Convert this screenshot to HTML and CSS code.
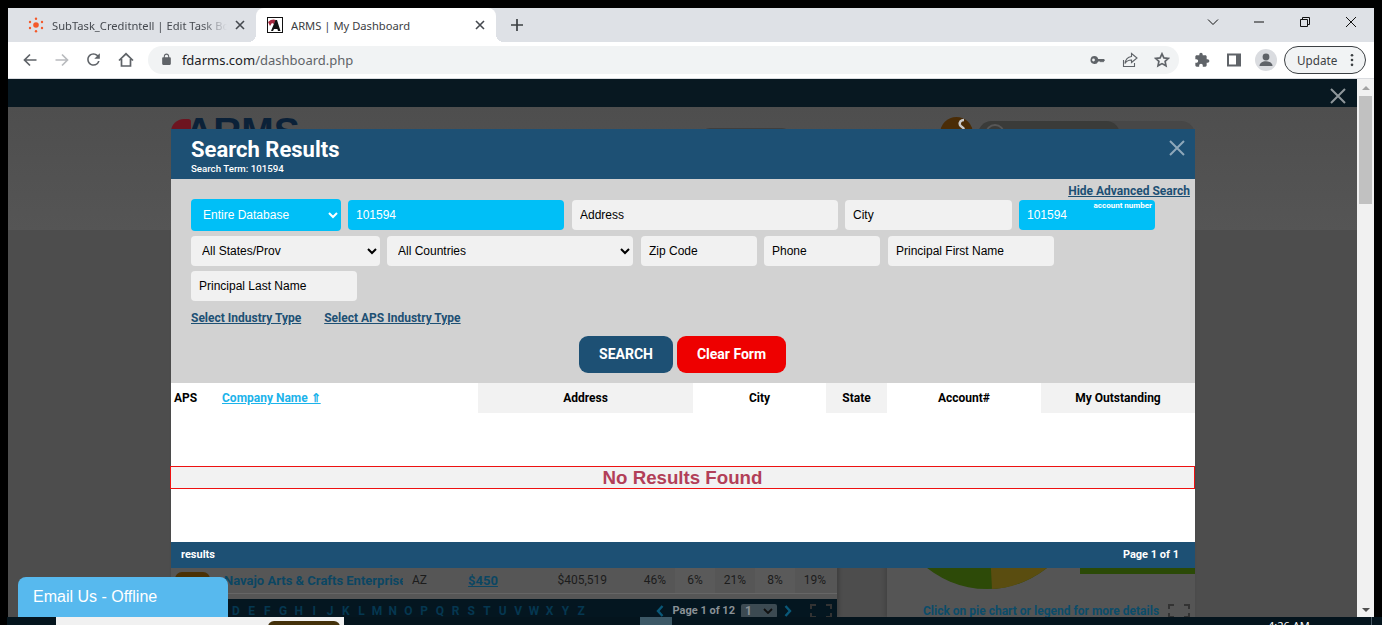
FILE: index.html
```html
<!DOCTYPE html>
<html lang="en">
<head>
  <meta charset="UTF-8">
  <meta name="viewport" content="width=device-width, initial-scale=1.0">
  <title>ARMS | My Dashboard</title>
  <link rel="stylesheet" href="styles.css">
</head>
<body>
  <div class="window">
    <div class="tabstrip">
      <div class="tab">
        <svg class="favicon" viewBox="0 0 16 16">
          <g fill="#f4592a">
            <circle cx="8" cy="8" r="2.8"/>
            <circle cx="8" cy="1.8" r="1.2"/>
            <circle cx="8" cy="14.2" r="1.2"/>
            <circle cx="2" cy="5" r="1.2"/>
            <circle cx="14" cy="5" r="1.2"/>
            <circle cx="2" cy="11" r="1.2"/>
            <circle cx="14" cy="11" r="1.2"/>
          </g>
        </svg>
        <span class="tab-title fade">SubTask_Creditntell | Edit Task Board</span>
        <svg class="tab-x" viewBox="0 0 10 10"><path d="M1 1l8 8M9 1l-8 8"/></svg>
      </div>
      <div class="tab active">
        <svg class="favicon" viewBox="0 0 16 16">
          <rect x="0.5" y="0.5" width="15" height="15" fill="#fff" stroke="#111"/>
          <path d="M1 5c3-3 6-3 8-2L7 7 5 6 3 9z" fill="#a3263d"/>
          <path d="M8.500 3h1.500l3.500 11h-2.500l-.6-2H7l-1 2H4z" fill="#111"/>
        </svg>
        <span class="tab-title">ARMS | My Dashboard</span>
        <svg class="tab-x" viewBox="0 0 10 10"><path d="M1 1l8 8M9 1l-8 8"/></svg>
      </div>
      <svg class="new-tab" viewBox="0 0 12 12"><path d="M6 0v12M0 6h12"/></svg>
      <div class="win-controls">
        <svg viewBox="0 0 12 12"><path d="M1 3.500l5 5 5-5"/></svg>
        <svg viewBox="0 0 12 12"><path d="M1 6h10"/></svg>
        <svg viewBox="0 0 12 12"><path d="M1.500 3.500h7v7h-7zM3.500 3.500v-2h7v7h-2"/></svg>
        <svg viewBox="0 0 12 12"><path d="M1 1l10 10M11 1L1 11"/></svg>
      </div>
    </div>

    <div class="toolbar">
      <button class="tool"><svg viewBox="0 0 16 16" class="line"><path d="M14.500 8h-12M8 2.500L2.500 8 8 13.500"/></svg></button>
      <button class="tool off"><svg viewBox="0 0 16 16" class="line"><path d="M1.500 8h12M8 2.500L13.500 8 8 13.500"/></svg></button>
      <button class="tool"><svg viewBox="0 0 24 24" class="solid"><path d="M17.650 6.350A7.958 7.958 0 0 0 12 4c-4.420 0-7.990 3.580-7.990 8s3.570 8 7.990 8c3.730 0 6.840-2.550 7.730-6h-2.080A5.990 5.990 0 0 1 12 18c-3.310 0-6-2.690-6-6s2.690-6 6-6c1.660 0 3.140.690 4.220 1.780L13 11h7V4l-2.350 2.350z"/></svg></button>
      <button class="tool"><svg viewBox="0 0 16 16" class="line"><path d="M1 8.500L8 1.800l7 6.700M3.500 7v7h9V7"/></svg></button>
      <div class="omnibox">
        <svg class="lock" viewBox="0 0 24 24"><path d="M18 8h-1V6c0-2.760-2.240-5-5-5S7 3.240 7 6v2H6c-1.100 0-2 .9-2 2v10c0 1.100.9 2 2 2h12c1.100 0 2-.9 2-2V10c0-1.100-.9-2-2-2zM9 6c0-1.660 1.340-3 3-3s3 1.340 3 3v2H9V6z"/></svg>
        <span class="url">fdarms.com<span class="url-path">/dashboard.php</span></span>
        <div class="omni-icons">
          <svg viewBox="0 0 16 16" class="solid"><path d="M4.500 4a4 4 0 1 0 3.700 5.500H10l1 1 1-1 1 1 2-2.200L14 7H8.200A4 4 0 0 0 4.500 4zm-1 2.600a1.400 1.400 0 1 1 0 2.800 1.400 1.400 0 0 1 0-2.800z"/></svg>
          <svg viewBox="0 0 16 16" class="line thin"><path d="M1.500 8v6.500h11V11M9.500 1.500L15 6l-5.500 4.500V8C6.500 8 4.500 9 3 11.500 3.500 7.500 6 5 9.500 4.500z"/></svg>
          <svg viewBox="0 0 16 16" class="line"><path d="M8 1.800l1.900 4.100 4.500.5-3.300 3 .9 4.400L8 11.600l-4 2.200.9-4.400-3.300-3 4.500-.5z"/></svg>
        </div>
      </div>
      <div class="browser-icons">
        <svg viewBox="0 0 24 24" class="solid"><path d="M20.500 11H19V7c0-1.100-.9-2-2-2h-4V3.500C13 2.120 11.880 1 10.500 1S8 2.120 8 3.500V5H4c-1.100 0-1.990.9-1.990 2v3.800H3.500c1.490 0 2.700 1.210 2.700 2.700s-1.210 2.700-2.700 2.700H2V20c0 1.100.9 2 2 2h3.800v-1.500c0-1.490 1.210-2.700 2.700-2.700 1.490 0 2.700 1.210 2.700 2.700V22H17c1.100 0 2-.9 2-2v-4h1.500c1.380 0 2.500-1.120 2.500-2.500S21.880 11 20.500 11z"/></svg>
        <svg viewBox="0 0 16 16"><rect x="1" y="1.500" width="14" height="13" fill="#5f6368"/><rect x="3" y="3.500" width="7" height="9" fill="#fff"/></svg>
        <span class="avatar">
          <svg viewBox="0 0 22 22"><circle cx="11" cy="8" r="3.400" fill="#5f6368"/><path d="M4.500 17c0-3 3-4.700 6.500-4.700s6.500 1.700 6.500 4.700z" fill="#5f6368"/></svg>
        </span>
      </div>
      <div class="update-pill">
        <span>Update</span>
        <svg viewBox="0 0 4 16"><circle cx="2" cy="2.500" r="1.500"/><circle cx="2" cy="8" r="1.500"/><circle cx="2" cy="13.500" r="1.500"/></svg>
      </div>
    </div>

    <div class="viewport">
      <div class="page">
        <div class="topbar">
          <svg class="topbar-x" viewBox="0 0 16 16"><path d="M1 1l14 14M15 1L1 15"/></svg>
        </div>
        <div class="page-head">
          <div class="logo"><span class="swoosh"></span><span class="logo-text">ARMS</span></div>
          <div class="head-pill"></div>
          <svg class="head-badge" viewBox="0 0 33 33">
            <circle cx="16.500" cy="16.500" r="16.500" fill="#4a2c06"/>
            <path d="M24 3c-3 0-5 2-4 5 1 2 3 2 4 4" fill="none" stroke="#c9c9c9" stroke-width="2.500"/>
          </svg>
          <div class="head-search"><div class="head-search-in"><span class="head-ring"></span></div></div>
        </div>
        <div class="page-main">
          <div class="aging-card">
            <div class="aging-row">
              <span class="aps-pill"></span>
              <span class="row-name">Navajo Arts &amp; Crafts Enterprise</span>
              <span class="row-state">AZ</span>
              <span class="row-due">$450</span>
              <span class="row-total">$405,519</span>
              <span class="pct">46%</span>
              <span class="pct alt">6%</span>
              <span class="pct">21%</span>
              <span class="pct alt">8%</span>
              <span class="pct">19%</span>
            </div>
            <div class="alpha-bar">
              <div class="letters">
                <span>A</span><span>B</span><span>C</span><span>D</span><span>E</span><span>F</span><span>G</span><span>H</span><span>I</span><span>J</span><span>K</span><span>L</span><span>M</span><span>N</span><span>O</span><span>P</span><span>Q</span><span>R</span><span>S</span><span>T</span><span>U</span><span>V</span><span>W</span><span>X</span><span>Y</span><span>Z</span>
              </div>
              <div class="pager">
                <svg class="chev" viewBox="0 0 8 12"><path d="M6.500 1L2 6l4.500 5"/></svg>
                <span>Page 1 of 12</span>
                <span class="pager-select">1<svg viewBox="0 0 10 6"><path d="M1 1l4 4 4-4"/></svg></span>
                <svg class="chev" viewBox="0 0 8 12"><path d="M1.500 1L6 6l-4.500 5"/></svg>
                <svg class="corners" viewBox="0 0 22 14"><path d="M1 5V1h5M16 1h5v4M1 9v4h5M16 13h5V9"/></svg>
              </div>
            </div>
          </div>
          <div class="pie-card">
            <div class="pie-row">
              <svg class="pie" viewBox="0 0 192 192">
                <circle cx="96" cy="96" r="96" fill="#2d4a08"/>
                <path d="M96 96L101 192A96 96 0 0 0 170 157z" fill="#5a4d10"/>
              </svg>
              <div class="legend-bar"></div>
            </div>
            <div class="pie-note">
              <span>Click on pie chart or legend for more details</span>
              <svg class="corners" viewBox="0 0 22 14"><path d="M1 5V1h5M16 1h5v4M1 9v4h5M16 13h5V9"/></svg>
            </div>
          </div>
        </div>
      </div>

      <div class="scrollbar">
        <span class="arrow up"></span>
        <span class="thumb"></span>
        <span class="arrow down"></span>
      </div>

      <div class="modal">
        <div class="modal-head">
          <div>
            <h1>Search Results</h1>
            <p>Search Term: 101594</p>
          </div>
          <svg class="modal-x" viewBox="0 0 16 16"><path d="M1 1l14 14M15 1L1 15"/></svg>
        </div>
        <form class="search-form">
          <div class="adv-row"><a href="#">Hide Advanced Search</a></div>
          <div class="field-row first">
            <select class="fld hot w150"><option>Entire Database</option></select>
            <input class="fld hot w216" type="text" value="101594">
            <input class="fld w266 skip" type="text" placeholder="Address">
            <input class="fld w167" type="text" placeholder="City">
            <div class="acct">
              <input class="fld hot w136" type="text" value="101594">
              <span class="acct-label">account number</span>
            </div>
          </div>
          <div class="field-row">
            <select class="fld w189"><option>All States/Prov</option></select>
            <select class="fld w246"><option>All Countries</option></select>
            <input class="fld w116 skip" type="text" placeholder="Zip Code">
            <input class="fld w116" type="text" placeholder="Phone">
            <input class="fld w166 skip" type="text" placeholder="Principal First Name">
          </div>
          <div class="field-row">
            <input class="fld w166" type="text" placeholder="Principal Last Name">
          </div>
          <div class="type-links">
            <a href="#">Select Industry Type</a>
            <a href="#">Select APS Industry Type</a>
          </div>
          <div class="form-btns">
            <button type="button" class="btn search">SEARCH</button>
            <button type="button" class="btn clear">Clear Form</button>
          </div>
        </form>
        <div class="results-head">
          <div class="col aps">APS</div>
          <div class="col company"><a href="#">Company Name ⇑</a></div>
          <div class="col shade">Address</div>
          <div class="col">City</div>
          <div class="col shade">State</div>
          <div class="col">Account#</div>
          <div class="col shade">My Outstanding</div>
        </div>
        <div class="results-body">
          <div class="no-results">No Results Found</div>
        </div>
        <div class="results-foot">
          <span>results</span>
          <span>Page 1 of 1</span>
        </div>
      </div>

      <div class="chat-tab">Email Us - Offline</div>
    </div>
  </div>

  <div class="taskbar">
    <div class="task-search"><span class="task-pill"></span></div>
    <div class="task-active"></div>
    <div class="task-clock">4:26 AM</div>
    <div class="task-edge"></div>
  </div>
</body>
</html>
```

FILE: styles.css
```css
* {
  box-sizing: border-box;
}
html, body {
  margin: 0;
  height: 625px;
  overflow: hidden;
  background: #000;
}
body {
  font-family: "Liberation Sans", Arial, sans-serif;
  display: flex;
  flex-direction: column;
}
svg {
  display: block;
}

/* browser chrome */
.window {
  margin: 8px 8px 0 8px;
  height: 609px;
  display: flex;
  flex-direction: column;
}
.tabstrip {
  height: 34px;
  background: #dee1e6;
  display: flex;
  align-items: stretch;
  padding-left: 8px;
  flex-shrink: 0;
}
.tab {
  width: 240px;
  display: flex;
  align-items: center;
  padding: 0 11px 0 12px;
  font: 11.2px "Noto Sans", sans-serif;
  color: #45494f;
}
.tab.active {
  position: relative;
  background: #fff;
  border-radius: 8px 8px 0 0;
  color: #3c4043;
  padding-left: 11px;
}
.tab.active::before,
.tab.active::after {
  content: "";
  position: absolute;
  bottom: 0;
  width: 8px;
  height: 8px;
}
.tab.active::before {
  left: -8px;
  background: radial-gradient(circle at 0 0, transparent 8px, #fff 8px);
}
.tab.active::after {
  right: -8px;
  background: radial-gradient(circle at 100% 0, transparent 8px, #fff 8px);
}
.favicon {
  width: 16px;
  height: 16px;
  margin-right: 8px;
  flex-shrink: 0;
}
.tab-title {
  flex: 1;
  white-space: nowrap;
  overflow: hidden;
}
.tab-title.fade {
  -webkit-mask-image: linear-gradient(to right, #000 85%, transparent);
  mask-image: linear-gradient(to right, #000 85%, transparent);
}
.tab-x {
  width: 10px;
  height: 10px;
  margin-left: 8px;
  fill: none;
  stroke: #45494f;
  stroke-width: 1.6;
  flex-shrink: 0;
}
.new-tab {
  width: 12px;
  height: 12px;
  margin: 11px 0 0 15px;
  fill: none;
  stroke: #3c4043;
  stroke-width: 1.7;
}
.win-controls {
  margin-left: auto;
  display: flex;
  gap: 34px;
  align-items: center;
  padding-right: 17px;
  height: 28px;
}
.win-controls svg {
  width: 12px;
  height: 12px;
  fill: none;
  stroke: #111;
  stroke-width: 1;
}

.toolbar {
  height: 37px;
  background: #fff;
  border-bottom: 1px solid #dadce0;
  display: flex;
  align-items: center;
  padding: 0 8px 1px 6px;
  flex-shrink: 0;
}
.tool {
  width: 32px;
  height: 28px;
  background: none;
  border: 0;
  padding: 0;
  display: flex;
  align-items: center;
  justify-content: center;
}
.tool svg {
  width: 16px;
  height: 16px;
}
.tool:nth-child(3) svg {
  width: 19px;
  height: 19px;
}
.line {
  fill: none;
  stroke: #5f6368;
  stroke-width: 1.7;
}
.line.thin {
  stroke-width: 1.1;
}
.solid {
  fill: #5f6368;
}
.tool.off .line {
  stroke: #b9bbbe;
}
.omnibox {
  width: 1032px;
  height: 28px;
  margin-left: 6px;
  background: #f1f3f4;
  border-radius: 14px;
  display: flex;
  align-items: center;
  padding: 0 9px 0 12px;
}
.lock {
  width: 13px;
  height: 13px;
  fill: #5f6368;
  margin-right: 9px;
}
.url {
  font: 13px "Noto Sans", sans-serif;
  color: #202124;
}
.url-path {
  color: #5f6368;
}
.omni-icons {
  margin-left: auto;
  display: flex;
  gap: 16px;
}
.omni-icons svg {
  width: 16px;
  height: 16px;
}
.browser-icons {
  display: flex;
  align-items: center;
  gap: 16px;
  margin-left: 15px;
}
.browser-icons > svg {
  width: 16px;
  height: 16px;
}
.avatar {
  width: 22px;
  height: 22px;
  border-radius: 50%;
  background: #dadce0;
  margin-left: -3px;
}
.avatar svg {
  width: 22px;
  height: 22px;
}
.update-pill {
  width: 82px;
  height: 28px;
  margin-left: 7px;
  border: 1px solid #3c4043;
  border-radius: 14px;
  background: #f1f3f4;
  display: flex;
  align-items: center;
  justify-content: space-between;
  padding: 0 11px 0 12px;
  font: 11.7px "Noto Sans", sans-serif;
  color: #3c4043;
}
.update-pill svg {
  width: 4px;
  height: 14px;
  fill: #3c4043;
}

/* dimmed dashboard under the modal */
.viewport {
  flex: 1;
  position: relative;
  display: flex;
  overflow: hidden;
  min-height: 0;
}
.page {
  flex: 1;
  display: flex;
  flex-direction: column;
  background: #4d4d4d;
  min-width: 0;
}
.topbar {
  height: 28px;
  background: #081821;
  flex-shrink: 0;
  display: flex;
  justify-content: flex-end;
  align-items: center;
  padding: 6px 11px 0 0;
}
.topbar-x {
  width: 16px;
  height: 16px;
  fill: none;
  stroke: #8f979b;
  stroke-width: 2;
}
.page-head {
  height: 123px;
  flex-shrink: 0;
  background: linear-gradient(#4e4e4e, #555);
  display: flex;
  align-items: flex-start;
  padding: 10px 0 0 163px;
  overflow: hidden;
}
.logo {
  width: 531px;
  display: flex;
  line-height: 1;
}
.swoosh {
  width: 20px;
  height: 13px;
  margin-top: 2px;
  background: #6d1420;
  border-radius: 18px 4px 0 0;
}
.logo-text {
  font-size: 39px;
  font-weight: 700;
  color: #0b2138;
  margin: -5px 0 0 -6px;
}
.head-pill {
  width: 88px;
  height: 30px;
  margin-top: 11px;
  background: #3e3e3e;
  border-radius: 8px;
}
.head-badge {
  width: 33px;
  height: 33px;
  margin-left: 150px;
}
.head-search {
  width: 217px;
  height: 40px;
  margin: 4px 0 0 5px;
  border-radius: 14px;
  background: #474747;
}
.head-search-in {
  width: 142px;
  height: 30px;
  border-radius: 14px;
  background: #3a3b39;
  padding: 3px 0 0 7px;
}
.head-ring {
  display: block;
  width: 20px;
  height: 20px;
  border: 2px solid #575757;
  border-radius: 50%;
}
.page-main {
  flex: 1;
  display: flex;
  padding-left: 163px;
  min-height: 0;
}
.aging-card {
  width: 666px;
  display: flex;
  flex-direction: column;
  justify-content: flex-end;
  box-shadow: 2px 0 4px rgba(0, 0, 0, 0.2);
}
.aging-row {
  height: 31px;
  display: flex;
  padding-top: 5px;
  font-size: 12px;
  color: #1c1c1c;
  background: linear-gradient(#565656 25px, #666 25px, #666 26px, #565656 26px);
  font-family: Roboto, sans-serif;
}
.aps-pill {
  width: 35px;
  height: 14px;
  margin: -1px 0 0 4px;
  border-radius: 8px;
  background: #4a3106;
}
.row-name {
  width: 179px;
  margin-left: 14px;
  overflow: hidden;
  white-space: nowrap;
  font-weight: 700;
  font-size: 13px;
  color: #0b4663;
}
.row-state {
  width: 41px;
  margin-left: 9px;
}
.row-due {
  width: 60px;
  text-align: center;
  font-size: 13px;
  font-weight: 700;
  color: #0b4663;
  text-decoration: underline;
}
.row-total {
  width: 94px;
  margin-right: 28px;
  text-align: right;
}
.pct {
  text-align: center;
  width: 40px;
  height: 25px;
  margin-top: -5px;
  padding-top: 5px;
}
.pct.alt {
  background: #5a5a5a;
}
.alpha-bar {
  height: 18px;
  background: #041620;
  display: flex;
  align-items: center;
  justify-content: space-between;
  padding: 5px 5px 0 0;
  font: 700 12px Roboto, sans-serif;
}
.letters {
  display: flex;
  color: #053750;
  padding-left: 10px;
}
.letters span {
  width: 15.7px;
  text-align: center;
}
.pager {
  display: flex;
  align-items: center;
  color: #8a9196;
  font-size: 11px;
  gap: 6px;
}
.chev {
  width: 8px;
  height: 12px;
  fill: none;
  stroke: #0a5878;
  stroke-width: 2.4;
}
.chev:first-child {
  margin-right: 3px;
}
.pager-select + .chev {
  margin-left: 1px;
}
.pager-select {
  width: 36px;
  height: 14px;
  padding: 0 4px;
  border-radius: 2px;
  background: #3c4a52;
  color: #8a9196;
  display: flex;
  align-items: center;
  justify-content: space-between;
  font-size: 12px;
}
.pager-select svg {
  width: 10px;
  height: 6px;
  fill: none;
  stroke: #111;
  stroke-width: 1.8;
}
.corners {
  width: 22px;
  height: 14px;
  fill: none;
  stroke: #333;
  stroke-width: 2;
  margin-left: 12px;
}
.pie-card {
  width: 308px;
  margin-left: 50px;
  background: #555;
  padding-top: 167px;
  box-shadow: -2px 0 4px rgba(0, 0, 0, 0.15);
  overflow: hidden;
}
.pie-row {
  display: flex;
  height: 192px;
  padding-left: 4px;
}
.pie {
  width: 192px;
  height: 192px;
  flex-shrink: 0;
}
.legend-bar {
  flex: 1;
  height: 20px;
  margin: 157px 0 0 -3px;
  background: #2b4a07;
}
.pie-note {
  margin-top: 15px;
  padding-left: 36px;
  display: flex;
  align-items: center;
  font: 700 12px Roboto, sans-serif;
  color: #0b4c6a;
}
.pie-note .corners {
  margin-left: 9px;
}

.scrollbar {
  width: 17px;
  background: #f1f1f1;
  display: flex;
  flex-direction: column;
  align-items: center;
  flex-shrink: 0;
  padding-top: 7px;
}
.thumb {
  width: 13px;
  height: 108px;
  margin-top: 6px;
  background: #c1c1c1;
}
.arrow {
  width: 0;
  height: 0;
  border-left: 4px solid transparent;
  border-right: 4px solid transparent;
}
.arrow.up {
  border-bottom: 4px solid #a3a3a3;
}
.arrow.down {
  border-top: 4px solid #505050;
  margin-top: auto;
  margin-bottom: 5px;
}

/* modal */
.modal {
  position: absolute;
  left: 163px;
  top: 50px;
  width: 1024px;
  display: flex;
  flex-direction: column;
  font-family: Roboto, sans-serif;
}
.modal-head {
  height: 50px;
  background: #1d5074;
  color: #fff;
  padding: 9px 10px 0 20px;
  display: flex;
  justify-content: space-between;
}
.modal-head h1 {
  margin: 0;
  font-size: 22px;
  font-weight: 700;
  line-height: 24px;
}
.modal-head p {
  margin: 1px 0 0;
  font-size: 9.7px;
  font-weight: 500;
  line-height: 11px;
}
.modal-x {
  width: 16px;
  height: 16px;
  margin-top: 2px;
  fill: none;
  stroke: #8ea8ba;
  stroke-width: 2;
}
.search-form {
  height: 204px;
  background: #d2d2d2;
  padding: 4px 0 0 20px;
}
.adv-row {
  height: 16px;
  text-align: right;
  padding-right: 5px;
  font-size: 12px;
  font-weight: 700;
  line-height: 16px;
}
.adv-row a, .type-links a {
  color: #1d5074;
}
.field-row {
  display: flex;
  gap: 7px;
  margin-top: 5px;
}
.field-row.first {
  margin-top: 0;
  height: 32px;
  align-items: center;
}
.fld {
  height: 30px;
  border: 0;
  border-radius: 4px;
  background-color: #f1f1f1;
  color: #000;
  font: 12px "Liberation Sans", Arial, sans-serif;
  padding: 0 8px;
  outline: 0;
}
.fld::placeholder {
  color: #000;
  opacity: 1;
}
select.fld {
  padding-left: 7px;
}
.fld.hot {
  background-color: #00bff7;
  color: #fff;
}
select.fld.hot {
  height: 32px;
  padding-left: 8px;
}
.skip {
  margin-left: 1px;
}
.w116 { width: 116px; }
.w136 { width: 136px; }
.w150 { width: 150px; }
.w166 { width: 166px; }
.w167 { width: 167px; }
.w189 { width: 189px; }
.w216 { width: 216px; }
.w246 { width: 246px; }
.w266 { width: 266px; }
.acct {
  position: relative;
  display: flex;
}
.acct-label {
  position: absolute;
  top: 1px;
  right: 3px;
  font-size: 8px;
  font-weight: 700;
  color: #fff;
  line-height: 10px;
}
.type-links {
  margin-top: 10px;
  height: 14px;
  display: flex;
  gap: 23px;
  font-size: 12px;
  font-weight: 700;
  line-height: 14px;
}
.form-btns {
  margin-top: 11px;
  display: flex;
  justify-content: center;
  gap: 4px;
  padding-right: 21px;
}
.btn {
  height: 37px;
  border: 0;
  border-radius: 9px;
  color: #fff;
  font: 700 14px Roboto, sans-serif;
  padding: 0 0 2px;
}
.btn.search {
  width: 94px;
  background: #1d5074;
}
.btn.clear {
  width: 109px;
  background: #ee0000;
}
.results-head {
  height: 30px;
  background: #fff;
  display: grid;
  grid-template-columns: 51px 256px 215px 133px 61px 154px 154px;
  font-size: 12px;
  font-weight: 700;
  color: #000;
}
.col {
  display: flex;
  align-items: center;
  justify-content: center;
}
.col.aps {
  justify-content: flex-start;
  padding-left: 3px;
}
.col.company {
  justify-content: flex-start;
}
.col.company a {
  color: #1cb3ea;
}
.col.shade {
  background: #f2f2f2;
}
.results-body {
  height: 129px;
  background: #fff;
  padding-top: 53px;
}
.no-results {
  height: 23px;
  margin-left: -1px;
  border: 1px solid #ee1111;
  background: #f2f2f2;
  color: #b23f58;
  font: 700 18.7px/21px "Liberation Sans", Arial, sans-serif;
  text-align: center;
}
.results-foot {
  height: 26px;
  background: #1d5074;
  color: #fff;
  display: flex;
  align-items: center;
  justify-content: space-between;
  padding: 0 16px 2px 10px;
  font-size: 11px;
  font-weight: 700;
}

.chat-tab {
  position: absolute;
  left: 10px;
  bottom: 0;
  width: 210px;
  height: 40px;
  padding: 10px 0 0 15px;
  background: #57b9ee;
  border-radius: 8px 8px 0 0;
  color: #fff;
  font-size: 16px;
  line-height: 20px;
}

/* taskbar peeking in at the bottom */
.taskbar {
  height: 8px;
  margin-left: 7px;
  background: #04141d;
  display: flex;
  overflow: hidden;
  flex-shrink: 0;
}
.task-search {
  width: 288px;
  height: 8px;
  margin-left: 49px;
  background: #f1f1f1;
  padding: 4px 0 0 212px;
}
.task-pill {
  display: block;
  width: 72px;
  height: 12px;
  background: #43300a;
  border-radius: 6px;
}
.task-active {
  width: 32px;
  margin-left: 296px;
  background: #3c5866;
}
.task-clock {
  margin-left: 596px;
  color: #fff;
  font: 11px/12px "Noto Sans", sans-serif;
  white-space: nowrap;
  padding-top: 3px;
}
.task-edge {
  width: 1px;
  margin: 0 10px 0 auto;
  background: #4a5a66;
}
```
